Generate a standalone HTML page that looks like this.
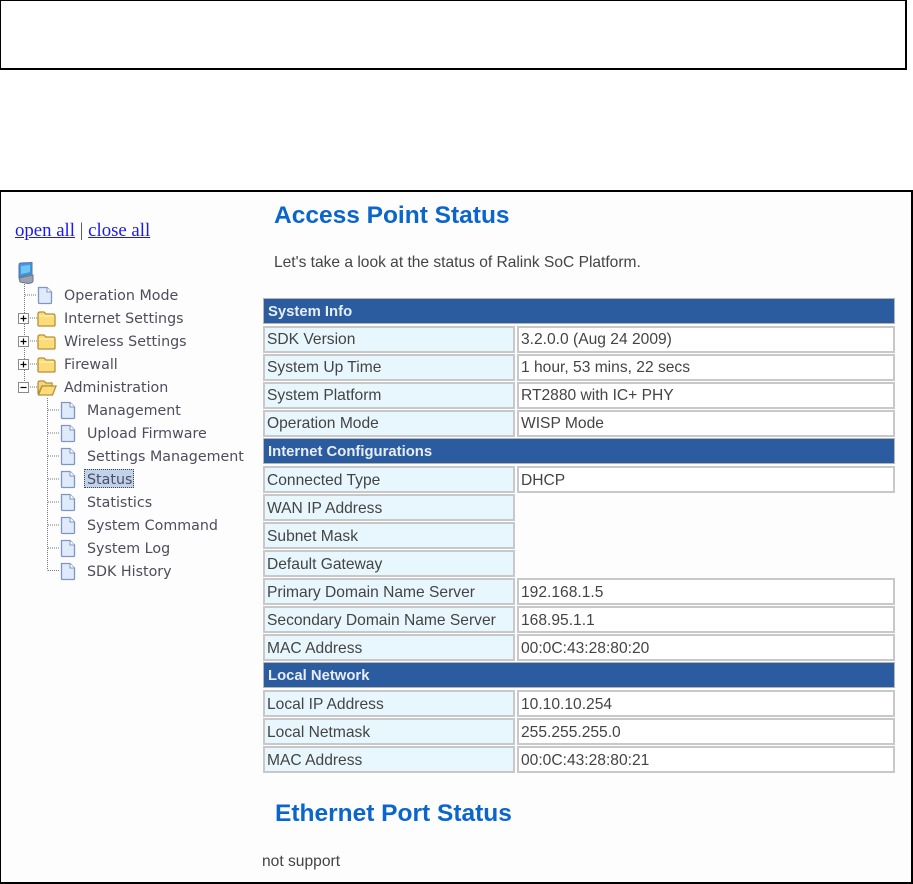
<!DOCTYPE html>
<html><head><meta charset="utf-8">
<style>
html,body{margin:0;padding:0;background:#fff;width:913px;height:884px;overflow:hidden}
.abs,.t,.h,.l,.v,.lb{position:absolute}
.t{font:14.25px/20px "DejaVu Sans",sans-serif;color:#4d4d5c;white-space:nowrap}
.h{left:263px;width:632px;height:26px;background:#2b5c9f;border:1px solid #b5b5b5;box-sizing:border-box;color:#e8eef8;font:bold 14.85px/26px "Liberation Sans",sans-serif;padding-left:4px;white-space:nowrap}
.l,.v{height:27px;box-sizing:border-box;border:2px solid #c8c8c8;font:15.6px/24px "Liberation Sans",sans-serif;color:#444;padding-left:2px;white-space:nowrap}
.l{left:263px;width:252px;background:#e8f6fe}
.v{left:517px;width:378px;background:#fff}
.d{line-height:26px}
.ttl{position:absolute;font:bold 24.5px/28px "Liberation Sans",sans-serif;color:#0a66cc;white-space:nowrap}
a{color:#1a1aee;text-decoration:underline}
</style></head><body>
<div class="abs" style="left:0;top:0;width:907px;height:70px;border:1px solid #000;border-width:1px 2px 2px 1px;box-sizing:border-box"></div>
<div class="abs" style="left:0;top:190px;width:913px;height:694px;border:1px solid #000;border-width:2px 2px 2px 1px;box-sizing:border-box;background:#fdfdfd"></div>

<div class="abs" style="left:15px;top:220px;font:18.8px/22px 'Liberation Serif',serif;color:#555;white-space:nowrap"><a>open all</a> | <a>close all</a></div>

<svg class="abs" style="left:0;top:255px" width="260" height="330" viewBox="0 255 260 330">
<defs>
<g id="pg"><path d="M1.5 .5H10L14.5 5V15.5Q14.500 16.500 13.500 16.500H2.500Q1.500 16.500 1.500 15.500Z" fill="#dfeafa" stroke="#7f95c4" stroke-width="1.3"/><path d="M10 .5V5H14.5" fill="#fff" stroke="#7f95c4"/></g>
<g id="fd"><path d="M1 4Q1 2 3 2H7L9 4H16Q18 4 18 6V15Q18 16 17 16H2Q1 16 1 15Z" fill="#fbdc78" stroke="#b98f35" stroke-width="1.3"/><path d="M2 6H17" stroke="#fff3c0"/></g>
<g id="fo"><path d="M1 4Q1 2 3 2H7L9 4H15V7H5L1 15Z" fill="#f5d67c" stroke="#b98f35" stroke-width="1.3"/><path d="M5 7H19L15.5 16H1.5Z" fill="#fbdc78" stroke="#b98f35" stroke-width="1.3"/></g>
<g id="pl"><rect x=".5" y=".5" width="10" height="10" fill="#fff" stroke="#8a8a8a"/><path d="M2.500 5.500H8.500M5.500 2.500V8.500" stroke="#000" stroke-width="1.200"/></g>
<g id="mi"><rect x=".5" y=".5" width="10" height="10" fill="#fff" stroke="#8a8a8a"/><path d="M2.500 5.500H8.500" stroke="#000" stroke-width="1.200"/></g>
</defs>
<g stroke="#777" stroke-dasharray="1 1" fill="none">
<path d="M24.5 282V387"/>
<path d="M25 295H37M30 318H37M30 341H37M30 364H37M30 387H37"/>
<path d="M47.500 398V570.500"/>
<path d="M48 410H60M48 433H60M48 456H60M48 479H60M48 502H60M48 525H60M48 548H60M48 570.500H60"/>
</g>
<g>
<path d="M19 265Q19 263 21 263L32 262.500V274L19 277Z" fill="#3d9ae8" stroke="#5a6f98"/>
<path d="M21 266L30 265V272L21 274Z" fill="#6fc6f5"/>
<path d="M19 278L33 275V281Q33 283 28 283.500L20 282Z" fill="#9aa3b5" stroke="#6a7186"/>
</g>
<use href="#pg" x="37" y="287"/>
<use href="#pl" x="18" y="313"/><use href="#fd" x="37" y="310"/>
<use href="#pl" x="18" y="336"/><use href="#fd" x="37" y="333"/>
<use href="#pl" x="18" y="359"/><use href="#fd" x="37" y="356"/>
<use href="#mi" x="18" y="382"/><use href="#fo" x="37" y="379"/>
<use href="#pg" x="60" y="402"/>
<use href="#pg" x="60" y="425"/>
<use href="#pg" x="60" y="448"/>
<use href="#pg" x="60" y="471"/>
<use href="#pg" x="60" y="494"/>
<use href="#pg" x="60" y="517"/>
<use href="#pg" x="60" y="540"/>
<use href="#pg" x="60" y="563"/>
</svg>

<div class="t" style="left:64px;top:286px">Operation Mode</div>
<div class="t" style="left:64px;top:309px">Internet Settings</div>
<div class="t" style="left:64px;top:332px">Wireless Settings</div>
<div class="t" style="left:64px;top:355px">Firewall</div>
<div class="t" style="left:64px;top:378px">Administration</div>
<div class="t" style="left:87px;top:401px">Management</div>
<div class="t" style="left:87px;top:424px">Upload Firmware</div>
<div class="t" style="left:87px;top:447px">Settings Management</div>
<div class="abs" style="left:84px;top:469px;width:50px;height:19px;background:#c0d2ec;border:1px dotted #444;box-sizing:border-box"></div>
<div class="t" style="left:87px;top:470px">Status</div>
<div class="t" style="left:87px;top:493px">Statistics</div>
<div class="t" style="left:87px;top:516px">System Command</div>
<div class="t" style="left:87px;top:539px">System Log</div>
<div class="t" style="left:87px;top:562px">SDK History</div>

<div class="ttl" style="left:274px;top:202px">Access Point Status</div>
<div class="abs" style="left:274px;top:254px;font:15.55px/18px 'Liberation Sans',sans-serif;color:#444;white-space:nowrap">Let's take a look at the status of Ralink SoC Platform.</div>

<div class="h" style="top:298px">System Info</div>
<div class="l" style="top:326px">SDK Version</div><div class="v" style="top:326px">3.2.0.0 (Aug 24 2009)</div>
<div class="l" style="top:354px">System Up Time</div><div class="v" style="top:354px">1 hour, 53 mins, 22 secs</div>
<div class="l" style="top:382px">System Platform</div><div class="v" style="top:382px">RT2880 with IC+ PHY</div>
<div class="l" style="top:410px">Operation Mode</div><div class="v" style="top:410px">WISP Mode</div>
<div class="h" style="top:438px">Internet Configurations</div>
<div class="l d" style="top:466px">Connected Type</div><div class="v d" style="top:466px">DHCP</div>
<div class="l d" style="top:494px">WAN IP Address</div>
<div class="l d" style="top:522px">Subnet Mask</div>
<div class="l d" style="top:550px">Default Gateway</div>
<div class="l d" style="top:578px">Primary Domain Name Server</div><div class="v d" style="top:578px">192.168.1.5</div>
<div class="l d" style="top:606px">Secondary Domain Name Server</div><div class="v d" style="top:606px">168.95.1.1</div>
<div class="l d" style="top:634px">MAC Address</div><div class="v d" style="top:634px">00:0C:43:28:80:20</div>
<div class="h" style="top:662px">Local Network</div>
<div class="l d" style="top:690px">Local IP Address</div><div class="v d" style="top:690px">10.10.10.254</div>
<div class="l d" style="top:718px">Local Netmask</div><div class="v d" style="top:718px">255.255.255.0</div>
<div class="l d" style="top:746px">MAC Address</div><div class="v d" style="top:746px">00:0C:43:28:80:21</div>

<div class="ttl" style="left:275px;top:800px">Ethernet Port Status</div>
<div class="abs" style="left:262px;top:853px;font:15.6px/18px 'Liberation Sans',sans-serif;color:#444;white-space:nowrap">not support</div>
</body></html>
